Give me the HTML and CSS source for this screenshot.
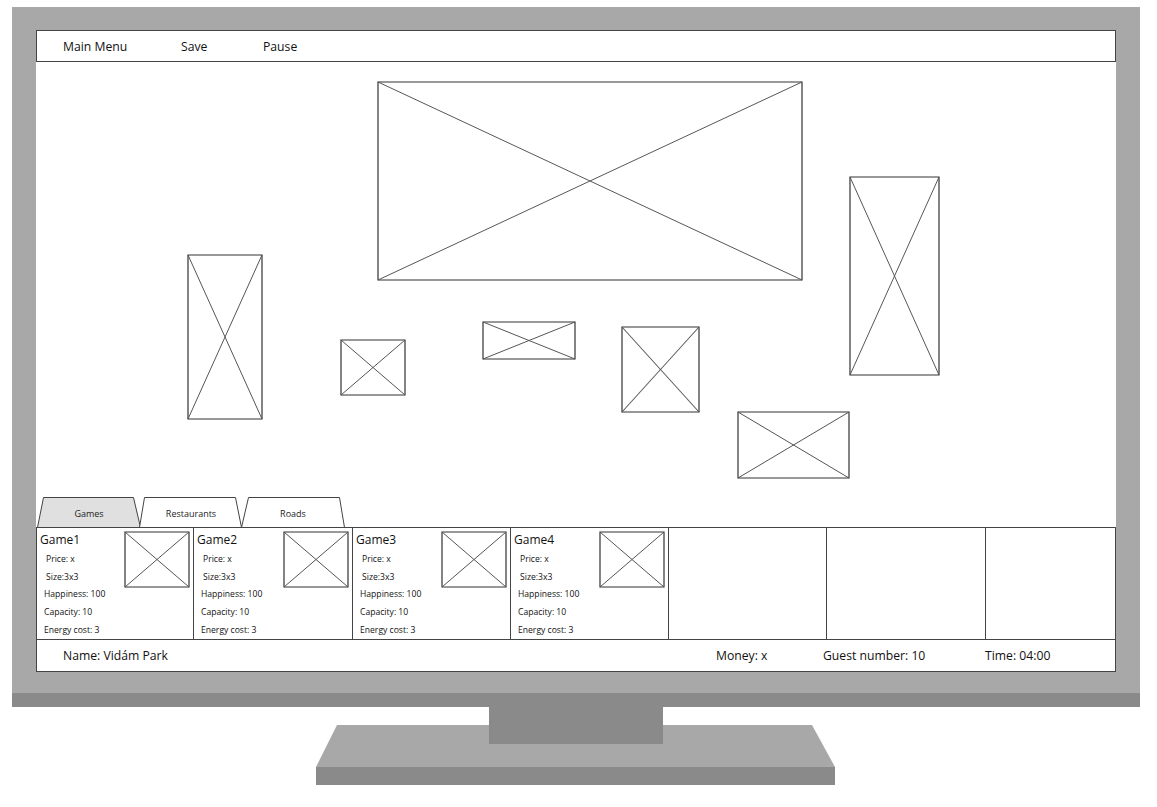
FILE: index.html
```html
<!DOCTYPE html>
<html lang="hu">
<head>
<meta charset="utf-8">
<title>Vidám Park</title>
<link rel="stylesheet" href="styles.css">
</head>
<body>
<div class="monitor">
  <div class="bezel">
    <div class="screen">
      <nav class="menubar">
        <span class="menu-item w-main">Main Menu</span>
        <span class="menu-item w-save">Save</span>
        <span class="menu-item">Pause</span>
      </nav>
      <div class="map">
        <svg class="ph ph1" viewBox="0 0 100 100" preserveAspectRatio="none"><rect x="0" y="0" width="100" height="100"/><line x1="0" y1="0" x2="100" y2="100"/><line x1="100" y1="0" x2="0" y2="100"/></svg>
        <svg class="ph ph2" viewBox="0 0 100 100" preserveAspectRatio="none"><rect x="0" y="0" width="100" height="100"/><line x1="0" y1="0" x2="100" y2="100"/><line x1="100" y1="0" x2="0" y2="100"/></svg>
        <svg class="ph ph3" viewBox="0 0 100 100" preserveAspectRatio="none"><rect x="0" y="0" width="100" height="100"/><line x1="0" y1="0" x2="100" y2="100"/><line x1="100" y1="0" x2="0" y2="100"/></svg>
        <svg class="ph ph4" viewBox="0 0 100 100" preserveAspectRatio="none"><rect x="0" y="0" width="100" height="100"/><line x1="0" y1="0" x2="100" y2="100"/><line x1="100" y1="0" x2="0" y2="100"/></svg>
        <svg class="ph ph5" viewBox="0 0 100 100" preserveAspectRatio="none"><rect x="0" y="0" width="100" height="100"/><line x1="0" y1="0" x2="100" y2="100"/><line x1="100" y1="0" x2="0" y2="100"/></svg>
        <svg class="ph ph6" viewBox="0 0 100 100" preserveAspectRatio="none"><rect x="0" y="0" width="100" height="100"/><line x1="0" y1="0" x2="100" y2="100"/><line x1="100" y1="0" x2="0" y2="100"/></svg>
        <svg class="ph ph7" viewBox="0 0 100 100" preserveAspectRatio="none"><rect x="0" y="0" width="100" height="100"/><line x1="0" y1="0" x2="100" y2="100"/><line x1="100" y1="0" x2="0" y2="100"/></svg>
      </div>
      <div class="tabs">
        <div class="tab active">
          <svg class="tab-shape" viewBox="0 0 104 31" preserveAspectRatio="none"><polygon points="0.5,30.5 6.5,0.5 96.5,0.5 103.5,30.5"/></svg>
          <span class="tab-label">Games</span>
        </div>
        <div class="tab">
          <svg class="tab-shape" viewBox="0 0 104 31" preserveAspectRatio="none"><polygon points="0.5,30.5 5.5,0.5 96.5,0.5 102.5,30.5"/></svg>
          <span class="tab-label">Restaurants</span>
        </div>
        <div class="tab">
          <svg class="tab-shape" viewBox="0 0 104 31" preserveAspectRatio="none"><polygon points="0.5,30.5 7.5,0.5 98.5,0.5 103.5,30.5"/></svg>
          <span class="tab-label">Roads</span>
        </div>
      </div>
      <div class="cards">
        <div class="card">
          <svg class="card-img" viewBox="0 0 100 100" preserveAspectRatio="none"><rect x="0" y="0" width="100" height="100"/><line x1="0" y1="0" x2="100" y2="100"/><line x1="100" y1="0" x2="0" y2="100"/></svg>
          <div class="card-title">Game1</div>
          <div class="stat ind">Price: x</div>
          <div class="stat ind">Size:3x3</div>
          <div class="stat">Happiness: 100</div>
          <div class="stat">Capacity: 10</div>
          <div class="stat">Energy cost: 3</div>
        </div>
        <div class="card">
          <svg class="card-img" viewBox="0 0 100 100" preserveAspectRatio="none"><rect x="0" y="0" width="100" height="100"/><line x1="0" y1="0" x2="100" y2="100"/><line x1="100" y1="0" x2="0" y2="100"/></svg>
          <div class="card-title">Game2</div>
          <div class="stat ind">Price: x</div>
          <div class="stat ind">Size:3x3</div>
          <div class="stat">Happiness: 100</div>
          <div class="stat">Capacity: 10</div>
          <div class="stat">Energy cost: 3</div>
        </div>
        <div class="card">
          <svg class="card-img" viewBox="0 0 100 100" preserveAspectRatio="none"><rect x="0" y="0" width="100" height="100"/><line x1="0" y1="0" x2="100" y2="100"/><line x1="100" y1="0" x2="0" y2="100"/></svg>
          <div class="card-title">Game3</div>
          <div class="stat ind">Price: x</div>
          <div class="stat ind">Size:3x3</div>
          <div class="stat">Happiness: 100</div>
          <div class="stat">Capacity: 10</div>
          <div class="stat">Energy cost: 3</div>
        </div>
        <div class="card">
          <svg class="card-img" viewBox="0 0 100 100" preserveAspectRatio="none"><rect x="0" y="0" width="100" height="100"/><line x1="0" y1="0" x2="100" y2="100"/><line x1="100" y1="0" x2="0" y2="100"/></svg>
          <div class="card-title">Game4</div>
          <div class="stat ind">Price: x</div>
          <div class="stat ind">Size:3x3</div>
          <div class="stat">Happiness: 100</div>
          <div class="stat">Capacity: 10</div>
          <div class="stat">Energy cost: 3</div>
        </div>
        <div class="card"></div>
        <div class="card"></div>
        <div class="card last"></div>
      </div>
      <div class="statusbar">
        <span class="status-name">Name: Vidám Park</span>
        <span class="status-item">Money: x</span>
        <span class="status-item">Guest number: 10</span>
        <span class="status-item">Time: 04:00</span>
      </div>
    </div>
  </div>
  <div class="chin"></div>
</div>
<div class="stand">
  <svg class="stand-svg" viewBox="0 0 1157 80" width="1157" height="80">
    <polygon class="base-top" points="337,18 812,18 835,60 316,60"/>
    <rect class="base-front" x="316" y="60" width="519" height="18"/>
    <rect class="neck" x="489" y="0" width="174" height="37"/>
  </svg>
</div>
</body>
</html>
```

FILE: styles.css
```css
* { box-sizing: border-box; }

html, body {
  margin: 0;
  padding: 0;
  background: #ffffff;
}

body {
  font-family: "Open Sans", "Noto Sans", "DejaVu Sans", sans-serif;
  color: #111;
  width: 1157px;
  height: 807px;
  overflow: hidden;
}

.monitor {
  margin: 7px 0 0 12px;
  width: 1128px;
}

.bezel {
  background: #a8a8a8;
  padding: 23px 24px 21px 24px;
}

.chin {
  height: 14px;
  background: #8a8a8a;
}

.screen {
  background: #ffffff;
  display: flex;
  flex-direction: column;
  height: 642px;
}

/* menu bar */
.menubar {
  height: 32px;
  border: 1px solid #444;
  display: flex;
  align-items: center;
  padding-left: 26px;
  font-size: 12.2px;
}
.menu-item { white-space: nowrap; }
.w-main { width: 118px; }
.w-save { width: 82px; }

/* map canvas */
.map {
  position: relative;
  height: 435px;
}
.ph {
  position: absolute;
  display: block;
  overflow: visible;
}
.ph rect, .card-img rect {
  fill: none;
  stroke: #333;
  stroke-width: 1.2px;
  vector-effect: non-scaling-stroke;
}
.ph line, .card-img line {
  stroke: #555;
  stroke-width: 1px;
  vector-effect: non-scaling-stroke;
}
.ph1 { left: 342px; top: 20px; width: 424px; height: 198px; }
.ph2 { left: 814px; top: 115px; width: 89px; height: 198px; }
.ph3 { left: 152px; top: 193px; width: 74px; height: 164px; }
.ph4 { left: 305px; top: 278px; width: 64px; height: 55px; }
.ph5 { left: 447px; top: 260px; width: 92px; height: 37px; }
.ph6 { left: 586px; top: 265px; width: 77px; height: 85px; }
.ph7 { left: 702px; top: 350px; width: 111px; height: 66px; }

/* tabs */
.tabs {
  height: 30px;
  display: flex;
  align-items: flex-end;
  padding-left: 1px;
}
.tab {
  position: relative;
  width: 104px;
  height: 31px;
  margin-bottom: -1px;
  margin-right: -2px;
  display: flex;
  align-items: center;
  justify-content: center;
}
.tab-shape {
  position: absolute;
  inset: 0;
  width: 104px;
  height: 31px;
}
.tab-shape polygon {
  fill: #ffffff;
  stroke: #444;
  stroke-width: 1px;
}
.tab.active .tab-shape polygon { fill: #e0e0e0; }
.tab-label {
  position: relative;
  font-size: 9px;
  color: #222;
  padding-top: 1px;
}

/* cards */
.cards {
  height: 113px;
  border: 1px solid #444;
  display: grid;
  grid-template-columns: 157px 159px 158px 158px 158px 159px 1fr;
  position: relative;
  z-index: 1;
}
.card {
  border-right: 1px solid #444;
  padding: 3px 0 0 3px;
  position: relative;
}
.card.last { border-right: none; }
.card-img {
  float: right;
  width: 64px;
  height: 55px;
  margin: 1px 4px 0 0;
  overflow: visible;
}
.card-title {
  font-size: 12px;
  line-height: 17px;
  height: 20px;
}
.stat {
  font-size: 8.6px;
  line-height: 17.7px;
  padding-left: 4px;
}
.stat.ind { padding-left: 6px; }

/* status bar */
.statusbar {
  height: 32px;
  border: 1px solid #444;
  border-top: none;
  display: grid;
  grid-template-columns: 1fr 107px 162px 130px;
  align-items: center;
  padding-left: 26px;
  font-size: 12.2px;
}
.status-item, .status-name { white-space: nowrap; }

/* stand */
.stand {
  height: 80px;
}
.stand-svg { display: block; }
.base-top { fill: #a8a8a8; }
.base-front { fill: #8a8a8a; }
.neck { fill: #8a8a8a; }
```
